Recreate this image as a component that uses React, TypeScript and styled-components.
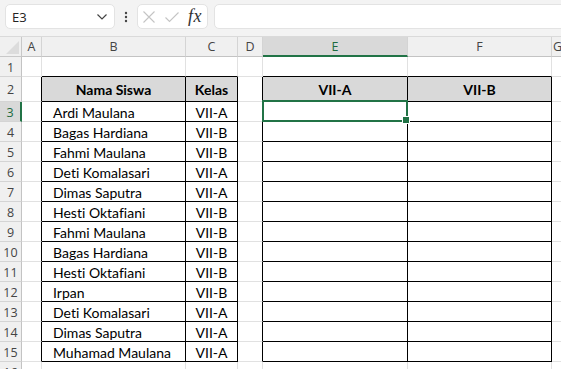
import React from 'react';
import styled, { createGlobalStyle } from 'styled-components';

const Global = createGlobalStyle`
  html, body { margin: 0; padding: 0; background: #fff; overflow: hidden; }
  #root { width: 561px; height: 369px; }
`;

const Frame = styled.div`
  width: 561px;
  height: 369px;
  overflow: hidden;
  display: flex;
  flex-direction: column;
  background: #fff;
`;

const Toolbar = styled.div`
  box-sizing: border-box;
  height: 37px;
  flex: none;
  background: #f3f3f3;
  border-bottom: 1px solid #dadada;
  display: flex;
  align-items: flex-start;
  padding: 4px 0 0 5px;
`;

const NameBox = styled.div`
  box-sizing: border-box;
  width: 110px;
  height: 25px;
  background: #fff;
  border: 1px solid #e3e3e3;
  border-radius: 5px;
  display: flex;
  align-items: center;
  justify-content: space-between;
  padding: 0 6px 0 6px;
  font-family: 'Open Sans', 'Noto Sans', sans-serif;
  font-size: 13px;
  color: #222;
`;

const Dots = styled.div`
  width: 22px;
  height: 25px;
  display: flex;
  align-items: center;
  justify-content: center;
`;

const FxBox = styled.div`
  box-sizing: border-box;
  width: 71px;
  height: 25px;
  background: #fff;
  border: 1px solid #e3e3e3;
  border-radius: 5px;
  display: flex;
  align-items: center;
  padding: 0 4px 0 4px;
`;

const FxText = styled.span`
  font-family: 'Liberation Serif', 'DejaVu Serif', serif;
  font-style: italic;
  font-size: 18px;
  color: #333;
  margin-left: 8px;
  letter-spacing: 0.5px;
`;

const FormulaInput = styled.div`
  box-sizing: border-box;
  flex: 1;
  margin-left: 6px;
  margin-right: -8px;
  height: 25px;
  background: #fff;
  border: 1px solid #e3e3e3;
  border-radius: 5px;
`;

const Sheet = styled.div`
  flex: 1;
  display: grid;
  grid-template-columns: 22px 20px 144px 52px 25px 145px 144px 1fr;
  grid-template-rows: 20px 20px 25px repeat(13, 20px) 20px;
  overflow: hidden;
`;

const Corner = styled.div`
  box-sizing: border-box;
  background: #f0f0f0;
  border-right: 1px solid #c8c8c8;
  border-bottom: 1px solid #c8c8c8;
  display: flex;
  align-items: flex-end;
  justify-content: flex-end;
  padding: 0 2px 2px 0;
`;

const ColHead = styled.div<{ $active?: boolean }>`
  box-sizing: border-box;
  background: ${p => (p.$active ? '#d9d9d9' : '#f0f0f0')};
  border-right: 1px solid #d4d4d4;
  border-bottom: ${p => (p.$active ? '2px solid #217346' : '1px solid #c3c3c3')};
  display: flex;
  align-items: center;
  justify-content: center;
  font-family: 'Open Sans', 'Noto Sans', sans-serif;
  font-size: 12.5px;
  color: ${p => (p.$active ? '#1d6b3f' : '#444')};
  overflow: hidden;
  white-space: nowrap;
`;

const RowHead = styled.div<{ $active?: boolean }>`
  box-sizing: border-box;
  background: ${p => (p.$active ? '#d9d9d9' : '#f0f0f0')};
  border-right: ${p => (p.$active ? '2px solid #217346' : '1px solid #c3c3c3')};
  border-bottom: 1px solid #d4d4d4;
  display: flex;
  align-items: center;
  justify-content: center;
  font-family: 'Open Sans', 'Noto Sans', sans-serif;
  font-size: 12.5px;
  color: ${p => (p.$active ? '#1d6b3f' : '#444')};
  padding-top: 1px;
`;

const Cell = styled.div<{
  $rb: boolean;
  $bb: boolean;
  $fill?: boolean;
  $align: 'left' | 'center';
  $bold?: boolean;
}>`
  position: relative;
  box-sizing: border-box;
  background: ${p => (p.$fill ? '#d9d9d9' : '#fff')};
  border-right: 1px solid ${p => (p.$rb ? '#000' : '#e1e1e1')};
  border-bottom: 1px solid ${p => (p.$bb ? '#000' : '#e1e1e1')};
  display: flex;
  align-items: center;
  justify-content: ${p => (p.$align === 'center' ? 'center' : 'flex-start')};
  padding-left: ${p => (p.$align === 'left' ? '11px' : '0')};
  font-family: 'Lato', 'Open Sans', sans-serif;
  font-size: 14px;
  font-weight: ${p => (p.$bold ? 700 : 400)};
  font-variant-ligatures: none;
  color: #000;
  white-space: nowrap;
  overflow: visible;
  padding-top: 1px;
`;

const Selection = styled.div`
  position: absolute;
  left: -1px;
  top: -2px;
  width: 146px;
  height: 22px;
  box-sizing: border-box;
  border: 2px solid #217346;
  pointer-events: none;
  z-index: 2;
`;

const Handle = styled.div`
  position: absolute;
  right: -4px;
  bottom: -4px;
  width: 6px;
  height: 6px;
  background: #217346;
  border: 1px solid #fff;
  box-sizing: content-box;
  z-index: 3;
`;

const cols = ['A', 'B', 'C', 'D', 'E', 'F', 'G'];

const students: [string, string][] = [
  ['Ardi Maulana', 'VII-A'],
  ['Bagas Hardiana', 'VII-B'],
  ['Fahmi Maulana', 'VII-B'],
  ['Deti Komalasari', 'VII-A'],
  ['Dimas Saputra', 'VII-A'],
  ['Hesti Oktafiani', 'VII-B'],
  ['Fahmi Maulana', 'VII-B'],
  ['Bagas Hardiana', 'VII-B'],
  ['Hesti Oktafiani', 'VII-B'],
  ['Irpan', 'VII-B'],
  ['Deti Komalasari', 'VII-A'],
  ['Dimas Saputra', 'VII-A'],
  ['Muhamad Maulana', 'VII-A'],
];

const inTable = (c: string, r: number) =>
  r >= 2 && r <= 15 && ['B', 'C', 'E', 'F'].includes(c);

const nextCol = (c: string) => cols[cols.indexOf(c) + 1] ?? 'H';

function cellContent(c: string, r: number): { text: string; bold?: boolean; align: 'left' | 'center' } {
  if (r === 2) {
    const h: Record<string, string> = { B: 'Nama Siswa', C: 'Kelas', E: 'VII-A', F: 'VII-B' };
    return { text: h[c] ?? '', bold: true, align: 'center' };
  }
  if (r >= 3 && r <= 15) {
    const s = students[r - 3];
    if (c === 'B') return { text: s[0], align: 'left' };
    if (c === 'C') return { text: s[1], align: 'center' };
  }
  return { text: '', align: 'left' };
}

export default function App() {
  const rows = Array.from({ length: 16 }, (_, i) => i + 1);
  return (
    <>
      <Global />
      <Frame>
        <Toolbar>
          <NameBox>
            <span>E3</span>
            <svg width="12" height="8" viewBox="0 0 12 8">
              <path d="M1.5 1.5 L6 6 L10.5 1.5" fill="none" stroke="#444" strokeWidth="1.2" />
            </svg>
          </NameBox>
          <Dots>
            <svg width="4" height="12" viewBox="0 0 4 12">
              <circle cx="2" cy="2" r="1.2" fill="#444" />
              <circle cx="2" cy="6" r="1.2" fill="#444" />
              <circle cx="2" cy="10" r="1.2" fill="#444" />
            </svg>
          </Dots>
          <FxBox>
            <svg width="14" height="14" viewBox="0 0 14 14">
              <path d="M1.5 1.5 L12.5 12.5 M12.5 1.5 L1.5 12.5" stroke="#c4c4c4" strokeWidth="1.1" fill="none" />
            </svg>
            <svg width="16" height="14" viewBox="0 0 16 14" style={{ marginLeft: 8 }}>
              <path d="M1.5 7.5 L5.5 11.5 L14.5 2.5" stroke="#c4c4c4" strokeWidth="1.1" fill="none" />
            </svg>
            <FxText>fx</FxText>
          </FxBox>
          <FormulaInput />
        </Toolbar>
        <Sheet>
          <Corner>
            <svg width="13" height="13" viewBox="0 0 13 13">
              <path d="M13 0 L13 13 L0 13 Z" fill="#dcdcdc" />
            </svg>
          </Corner>
          {cols.map(c => (
            <ColHead key={c} $active={c === 'E'}>
              {c}
            </ColHead>
          ))}
          {rows.map(r => (
            <React.Fragment key={r}>
              <RowHead $active={r === 3}>{r}</RowHead>
              {cols.map(c => {
                const t = inTable(c, r);
                const rb = t || inTable(nextCol(c), r);
                const bb = t || inTable(c, r + 1);
                const content = cellContent(c, r);
                return (
                  <Cell
                    key={c}
                    $rb={rb}
                    $bb={bb}
                    $fill={r === 2 && t}
                    $align={content.align}
                    $bold={content.bold}
                  >
                    {content.text}
                    {c === 'E' && r === 3 && (
                      <Selection>
                        <Handle />
                      </Selection>
                    )}
                  </Cell>
                );
              })}
            </React.Fragment>
          ))}
        </Sheet>
      </Frame>
    </>
  );
}
